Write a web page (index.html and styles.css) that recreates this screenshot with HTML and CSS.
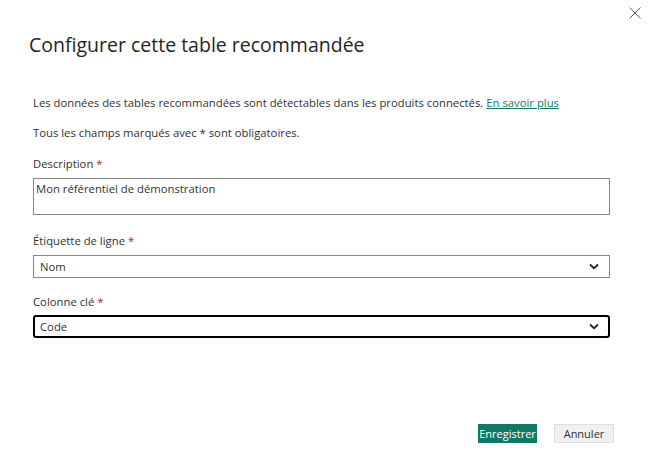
FILE: index.html
```
<!DOCTYPE html>
<html lang="fr">
<head>
<meta charset="utf-8">
<link rel="stylesheet" href="styles.css">
</head>
<body>
<div class="dialog">
  <button class="close" aria-label="Fermer">
    <svg width="12" height="12" viewBox="0 0 12 12"><path d="M0.5 0.5 L11.5 11.5 M11.5 0.5 L0.5 11.5" stroke="#605e5c" stroke-width="1" fill="none"/></svg>
  </button>
  <h1 class="title">Configurer cette table recommandée</h1>
  <p class="info">Les données des tables recommandées sont détectables dans les produits connectés. <a href="#" class="link">En savoir plus</a></p>
  <p class="info second">Tous les champs marqués avec * sont obligatoires.</p>

  <div class="label first-label">Description <span class="req">*</span></div>
  <div class="textarea">Mon référentiel de démonstration</div>

  <div class="label">Étiquette de ligne <span class="req">*</span></div>
  <div class="select">
    <span>Nom</span>
    <svg class="chev" width="10" height="7" viewBox="0 0 10 7"><path d="M1 1.5 L5 5.2 L9 1.5" stroke="#252423" stroke-width="1.8" fill="none"/></svg>
  </div>

  <div class="label">Colonne clé <span class="req">*</span></div>
  <div class="select focus">
    <span>Code</span>
    <svg class="chev" width="10" height="7" viewBox="0 0 10 7"><path d="M1 1.5 L5 5.2 L9 1.5" stroke="#252423" stroke-width="1.8" fill="none"/></svg>
  </div>

  <div class="footer">
    <button class="btn primary">Enregistrer</button>
    <button class="btn secondary">Annuler</button>
  </div>
</div>
</body>
</html>
```
FILE: styles.css
```
* { box-sizing: border-box; }
html, body { margin: 0; padding: 0; background: #fff; }
body {
  font-family: "Open Sans", "Noto Sans", sans-serif;
  color: #323130;
  width: 650px;
  height: 454px;
  overflow: hidden;
}
.dialog {
  position: relative;
  display: flow-root;
  padding: 0 40px 0 33px;
  height: 454px;
}
.close {
  position: absolute;
  top: 7px;
  right: 9px;
  width: 12px;
  height: 12px;
  padding: 0;
  border: 0;
  background: none;
  display: block;
}
.close svg { display: block; }
.title {
  margin: 30px 0 0 -4px;
  font-size: 19.5px;
  font-weight: 400;
  line-height: 30px;
  height: 30px;
  color: #252423;
}
.info {
  margin: 35px 0 0;
  font-size: 11.3px;
  line-height: 16px;
}
.info.second { margin-top: 14px; }
.link { color: #117865; text-decoration: underline; }
.label {
  margin-top: 16px;
  font-size: 11.3px;
  line-height: 16px;
}
.label.first-label { margin-top: 15px; }
.req { color: #a4262c; }
.textarea {
  margin-top: 6px;
  width: 577px;
  height: 37px;
  border: 1px solid #8a8886;
  padding: 2px 2px;
  font-size: 11.3px;
  line-height: 16px;
}
.select {
  margin-top: 6px;
  width: 577px;
  height: 23px;
  border: 1px solid #8a8886;
  padding: 0 10px 0 6px;
  display: flex;
  align-items: center;
  justify-content: space-between;
  font-size: 11.3px;
}
.select.focus {
  margin-top: 5px;
  border: 2px solid #000;
  border-radius: 3px;
  padding: 0 9px 0 5px;
}
.textarea + .label { margin-top: 18px; }
.chev { display: block; }
.footer {
  margin-top: 86px;
  display: flex;
  justify-content: flex-end;
  gap: 17px;
  width: 581px;
}
.btn {
  height: 19px;
  font-family: inherit;
  font-size: 11px;
  padding: 0;
  line-height: 17px;
}
.primary {
  width: 59px;
  background: #117865;
  color: #fff;
  border: 1px solid #117865;
}
.secondary {
  width: 60px;
  background: #f0f0f0;
  color: #323130;
  border: 1px solid #e1dfdd;
}
```
